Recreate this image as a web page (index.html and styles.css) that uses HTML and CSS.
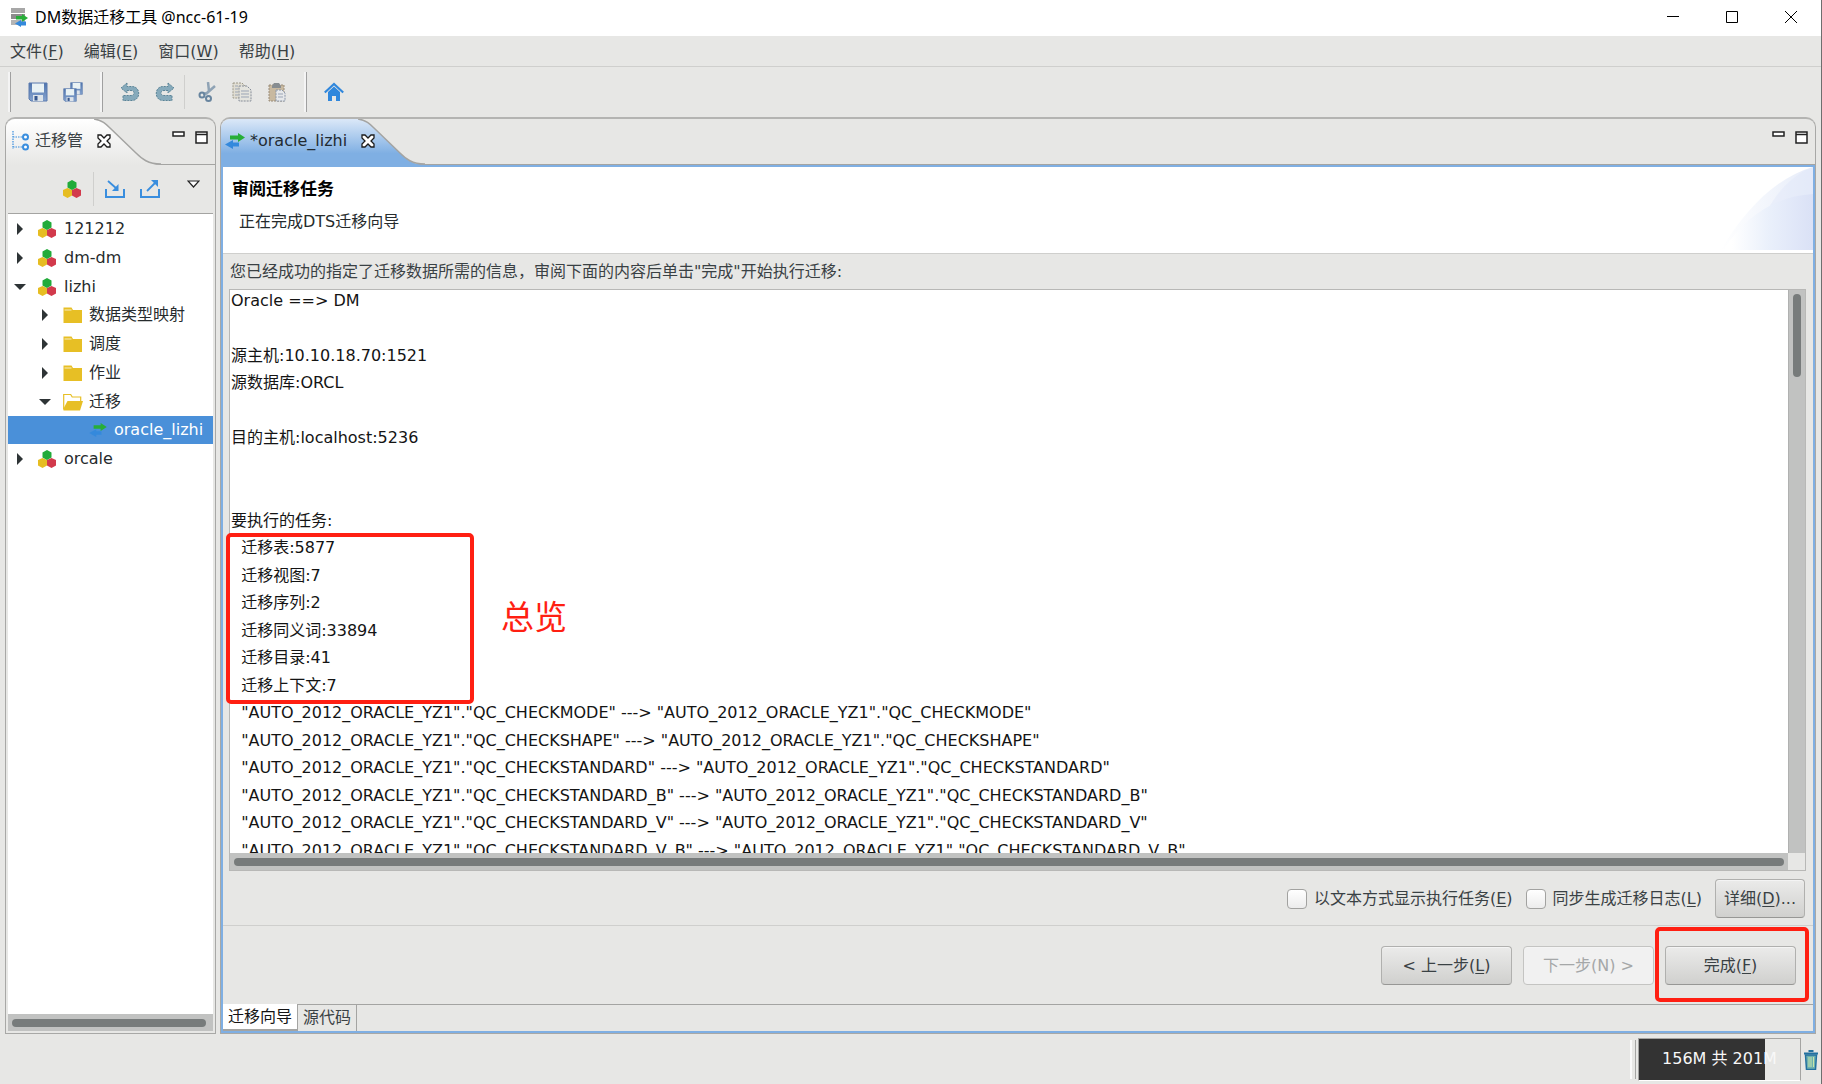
FILE: index.html
```html
<!DOCTYPE html>
<html lang="zh-CN">
<head>
<meta charset="utf-8">
<title>DM数据迁移工具 @ncc-61-19</title>
<link rel="stylesheet" href="styles.css">
</head>
<body>
<svg class="defs" aria-hidden="true">
  <defs>
    <linearGradient id="tab-plain" x1="0" y1="0" x2="0" y2="1"><stop offset="0" stop-color="#ffffff"/><stop offset="1" stop-color="#e7e7e5"/></linearGradient>
    <linearGradient id="tab-blue" x1="0" y1="0" x2="0" y2="1"><stop offset="0" stop-color="#dbe8f8"/><stop offset="0.75" stop-color="#7fafe3"/><stop offset="1" stop-color="#7fafe3"/></linearGradient>
    <linearGradient id="swoosh-a" x1="0" x2="1" y1="0" y2="0"><stop offset="0" stop-color="#ffffff"/><stop offset="1" stop-color="#e6ecf9"/></linearGradient>
    <linearGradient id="swoosh-b" x1="0" x2="1" y1="0" y2="0"><stop offset="0.1" stop-color="#ffffff"/><stop offset="0.5" stop-color="#eaf0fb"/><stop offset="1" stop-color="#dae1f6"/></linearGradient>
    <linearGradient id="floppy" x1="0" x2="0" y1="0" y2="1"><stop offset="0" stop-color="#4f74ad"/><stop offset="1" stop-color="#86a4cf"/></linearGradient>
    <symbol id="i-arrows" viewBox="0 0 20 16"><path d="M5 2.500h8V0l7 4.500-7 4.500V6.500H5z" fill="#27ae38"/><path d="M14 9.500H8V7l-8 4.500L8 16v-2.500h6z" fill="#3489dc"/></symbol>
    <symbol id="i-dm" viewBox="0 0 18 18"><path d="M4.500 8L9 10v5.500L4.500 18 0 15.500V10z" fill="#e6bd22"/><path d="M13.500 8L18 10v5.500L13.500 18 9 15.500V10z" fill="#d23a4c"/><path d="M9 0l4.500 2.500v5L9 10 4.500 7.500v-5z" fill="#22ab3a"/></symbol>
    <symbol id="i-close" viewBox="0 0 14 14"><path d="M1 1h3l3 3 3-3h3v3l-3 3 3 3v3h-3l-3-3-3 3H1v-3l3-3-3-3z" fill="#fff" stroke="#1c1c1c" stroke-width="1.300"/></symbol>
    <symbol id="i-min" viewBox="0 0 13 13"><rect x="1" y="1" width="11" height="4" fill="#fff" stroke="#222" stroke-width="1.500"/></symbol>
    <symbol id="i-max" viewBox="0 0 13 13"><rect x="1" y="1" width="11" height="11" fill="#fff" stroke="#222" stroke-width="1.500"/><path d="M1 3.500h11" stroke="#222" stroke-width="1.500"/></symbol>
    <symbol id="i-folder" viewBox="0 0 20 17"><path d="M.5 1h8l1.500 2.500h9V16.500H.5z" fill="#e7bf25"/><path d="M1.500 3.500h7" stroke="#f8ecc0"/></symbol>
    <symbol id="i-folder-open" viewBox="0 0 20 17"><path d="M.7 16V1h7l1.500 2.500h8.500v4" fill="#fff" stroke="#e7bf25" stroke-width="1.200"/><path d="M4.500 7.500H20L17 17H.5V15z" fill="#e7bf25"/></symbol>
    <symbol id="i-right" viewBox="0 0 12 12"><path d="M3 0l6 6-6 6z" fill="#2e3436"/></symbol>
    <symbol id="i-down" viewBox="0 0 12 12"><path d="M0 3h12L6 9z" fill="#2e3436"/></symbol>
    <symbol id="i-floppy" viewBox="0 0 20 20"><path d="M1 1h18v18H3l-2-2z" fill="url(#floppy)" stroke="#5a7bae"/><rect x="4" y="1.500" width="12" height="9" fill="#e9f2f4"/><rect x="5" y="13" width="10" height="6" fill="#dde4ea"/><rect x="6.500" y="14" width="3" height="4.500" fill="#37588f"/></symbol>
    <symbol id="i-undo" viewBox="0 0 20 20"><path d="M7 1L1 6l6 5V8.500h4c4 0 4 5 0 5H3v5h9c9 0 9-14 0-14H7z" fill="#86aabb" stroke="#5b8497" stroke-dasharray="2 1"/></symbol>
  </defs>
</svg>

<header class="titlebar">
  <svg class="app-icon" viewBox="0 0 18 20"><path d="M1 1h14v5H1z" fill="#a7a7a7"/><path d="M1 7h14v5H1z" fill="#8c8c8c"/><path d="M1 13h14v5H1z" fill="#b5b5b5"/><path d="M6 9h6V7l6 4-6 4v-2.500H6z" fill="#27ae38"/><path d="M16 14.500h-5V13l-6 3.500 6 3.500v-1.500h5z" fill="#3489dc"/></svg>
  <span class="app-title">DM数据迁移工具 @ncc-61-19</span>
  <div class="window-controls">
    <button aria-label="最小化"><svg viewBox="0 0 12 12"><path d="M0 5.500h12"/></svg></button>
    <button aria-label="最大化"><svg viewBox="0 0 12 12"><path d="M.5.5h11v11H.5z"/></svg></button>
    <button aria-label="关闭"><svg viewBox="0 0 12 12"><path d="M0 0l12 12M12 0L0 12"/></svg></button>
  </div>
</header>

<div class="window">
  <nav class="menubar">
    <button>文件(<u>F</u>)</button>
    <button>编辑(<u>E</u>)</button>
    <button>窗口(<u>W</u>)</button>
    <button>帮助(<u>H</u>)</button>
  </nav>

  <div class="toolbar">
    <div class="group">
      <button aria-label="保存"><svg viewBox="0 0 20 20"><use href="#i-floppy"/></svg></button>
      <button aria-label="全部保存"><svg viewBox="0 0 20 20"><use href="#i-floppy" x="7" y="0" width="13" height="13"/><use href="#i-floppy" x="0" y="6" width="14" height="14"/></svg></button>
    </div>
    <div class="group">
      <button aria-label="撤销"><svg viewBox="0 0 20 20"><use href="#i-undo"/></svg></button>
      <button aria-label="重做"><svg viewBox="0 0 20 20"><use href="#i-undo" transform="matrix(-1 0 0 1 20 0)"/></svg></button>
      <span class="divider"></span>
      <button aria-label="剪切"><svg viewBox="0 0 20 20"><path d="M11 0l1 9-3 3M18 4l-8 7-4 1" fill="none" stroke="#8fa3b5" stroke-width="2.500"/><circle cx="5" cy="13" r="2.500" fill="none" stroke="#68859f" stroke-width="2"/><circle cx="11.500" cy="16.500" r="2.500" fill="none" stroke="#68859f" stroke-width="2"/></svg></button>
      <button aria-label="复制"><svg viewBox="0 0 20 20"><path d="M1 1h9l3 3v12H1z" fill="#e0ddd2" stroke="#9c9888" stroke-dasharray="2 1"/><path d="M7 4h8l4 4v11H7z" fill="#e4e4de" stroke="#858c98" stroke-dasharray="2 1"/><path d="M3 4h3M3 7h3M3 10h3M3 13h3M9 9h8M9 12h8M9 15h8" stroke="#9ba5b5"/></svg></button>
      <button aria-label="粘贴"><svg viewBox="0 0 20 20"><path d="M2 3h15v16H2z" fill="#c8b9a0" stroke="#9a8c78" stroke-dasharray="2 1"/><path d="M5 4l2-3h5l2 3v2H5z" fill="#878d91"/><path d="M9 8h6l3 3v8H9z" fill="#e6e8ea" stroke="#8995a8" stroke-dasharray="2 1"/><path d="M11 12h5M11 15h5" stroke="#9ba5b5"/></svg></button>
    </div>
    <div class="group">
      <button aria-label="主页"><svg viewBox="0 0 20 20"><path d="M.8 10.500L10 2l9.200 8.500" fill="none" stroke="#3087dc" stroke-width="2.200"/><path d="M4 10l6-5.500 6 5.500v9h-4v-5H8v5H4z" fill="#3087dc"/></svg></button>
    </div>
  </div>

  <main class="workbench">
    <aside class="panel navigator">
      <div class="tabbar">
        <div class="tab plain">
          <svg class="tab-tail" viewBox="0 0 67 46"><path d="M0 0C8 1 12 5 16 9L42 34C48 40 54 45.500 67 46H0z" fill="url(#tab-plain)"/><path d="M0 0C8 1 12 5 16 9L42 34C48 40 54 45 67 45" fill="none" stroke="#a4a4a2" stroke-width="1.500"/></svg>
          <svg class="tab-icon" viewBox="0 0 18 20"><path d="M1 0v18M1 6h10M1 16h10" fill="none" stroke="#3a8ede" stroke-width="1.200" stroke-dasharray="1.500 1"/><circle cx="13.500" cy="6" r="2.500" fill="#fff" stroke="#3a8ede" stroke-width="2"/><circle cx="13.500" cy="16" r="2.500" fill="#fff" stroke="#3a8ede" stroke-width="2"/></svg>
          <span>迁移管</span>
          <button class="close" aria-label="关闭"><svg viewBox="0 0 14 14"><use href="#i-close"/></svg></button>
        </div>
        <div class="panel-controls">
          <button aria-label="最小化"><svg viewBox="0 0 13 13"><use href="#i-min"/></svg></button>
          <button aria-label="最大化"><svg viewBox="0 0 13 13"><use href="#i-max"/></svg></button>
        </div>
      </div>
      <div class="view-toolbar">
        <button aria-label="新建工程"><svg viewBox="0 0 18 18"><use href="#i-dm"/></svg></button>
        <span class="divider"></span>
        <button aria-label="导入"><svg viewBox="0 0 20 18"><path d="M1 9v8h18V9" fill="none" stroke="#3a8ede" stroke-width="2"/><path d="M3 1l9 8" stroke="#3a8ede" stroke-width="1.800"/><path d="M13.500 4v7H7z" fill="#3a8ede"/></svg></button>
        <button aria-label="导出"><svg viewBox="0 0 20 18"><path d="M1 9v8h18V9" fill="none" stroke="#3a8ede" stroke-width="2"/><path d="M7 11l9-9" stroke="#3a8ede" stroke-width="1.800"/><path d="M11 0h7v7z" fill="#3a8ede"/></svg></button>
        <button class="view-menu" aria-label="视图菜单"><svg viewBox="0 0 13 8"><path d="M1 1h11L6.500 7z" fill="#fff" stroke="#222" stroke-width="1.200"/></svg></button>
      </div>
      <ul class="tree">
        <li><svg class="twist"><use href="#i-right"/></svg><svg class="node"><use href="#i-dm"/></svg>121212</li>
        <li><svg class="twist"><use href="#i-right"/></svg><svg class="node"><use href="#i-dm"/></svg>dm-dm</li>
        <li><svg class="twist"><use href="#i-down"/></svg><svg class="node"><use href="#i-dm"/></svg>lizhi</li>
        <li class="level2"><svg class="twist"><use href="#i-right"/></svg><svg class="node"><use href="#i-folder"/></svg>数据类型映射</li>
        <li class="level2"><svg class="twist"><use href="#i-right"/></svg><svg class="node"><use href="#i-folder"/></svg>调度</li>
        <li class="level2"><svg class="twist"><use href="#i-right"/></svg><svg class="node"><use href="#i-folder"/></svg>作业</li>
        <li class="level2"><svg class="twist"><use href="#i-down"/></svg><svg class="node"><use href="#i-folder-open"/></svg>迁移</li>
        <li class="level3 selected"><svg class="node"><use href="#i-arrows"/></svg>oracle_lizhi</li>
        <li><svg class="twist"><use href="#i-right"/></svg><svg class="node"><use href="#i-dm"/></svg>orcale</li>
      </ul>
      <div class="scroll-h"><div class="thumb"></div></div>
    </aside>

    <section class="panel editor">
      <div class="tabbar">
        <div class="tab blue">
          <svg class="tab-tail" viewBox="0 0 67 46"><path d="M0 0C8 1 12 5 16 9L42 34C48 40 54 45.500 67 46H0z" fill="url(#tab-blue)"/><path d="M0 0C8 1 12 5 16 9L42 34C48 40 54 45 67 45" fill="none" stroke="#a4a4a2" stroke-width="1.500"/></svg>
          <svg class="tab-icon" viewBox="0 0 20 16"><use href="#i-arrows"/></svg>
          <span>*oracle_lizhi</span>
          <button class="close" aria-label="关闭"><svg viewBox="0 0 14 14"><use href="#i-close"/></svg></button>
        </div>
        <div class="panel-controls">
          <button aria-label="最小化"><svg viewBox="0 0 13 13"><use href="#i-min"/></svg></button>
          <button aria-label="最大化"><svg viewBox="0 0 13 13"><use href="#i-max"/></svg></button>
        </div>
      </div>
      <div class="editor-body">
        <div class="wizard-header">
          <div>
            <h1>审阅迁移任务</h1>
            <p>正在完成DTS迁移向导</p>
          </div>
          <svg class="swoosh" viewBox="0 0 92 83"><path d="M0 83C24 42 56 10 92 0V83z" fill="url(#swoosh-a)"/><path d="M46 44C58 22 72 8 92 0V83H46z" fill="#dfe7f8" opacity=".45"/><path d="M2 83C24 50 54 29 92 27V83z" fill="url(#swoosh-b)"/></svg>
        </div>
        <p class="prompt" id="prompt">您已经成功的指定了迁移数据所需的信息，审阅下面的内容后单击"完成"开始执行迁移:</p>
        <div class="review">
          <div class="review-text" role="document" aria-labelledby="prompt">
            <p>Oracle ==&gt; DM</p>
            <p></p>
            <p>源主机:10.10.18.70:1521</p>
            <p>源数据库:ORCL</p>
            <p></p>
            <p>目的主机:localhost:5236</p>
            <p></p>
            <p></p>
            <p>要执行的任务:</p>
            <p>  迁移表:5877</p>
            <p>  迁移视图:7</p>
            <p>  迁移序列:2</p>
            <p>  迁移同义词:33894</p>
            <p>  迁移目录:41</p>
            <p>  迁移上下文:7</p>
            <p>  "AUTO_2012_ORACLE_YZ1"."QC_CHECKMODE" ---&gt; "AUTO_2012_ORACLE_YZ1"."QC_CHECKMODE"</p>
            <p>  "AUTO_2012_ORACLE_YZ1"."QC_CHECKSHAPE" ---&gt; "AUTO_2012_ORACLE_YZ1"."QC_CHECKSHAPE"</p>
            <p>  "AUTO_2012_ORACLE_YZ1"."QC_CHECKSTANDARD" ---&gt; "AUTO_2012_ORACLE_YZ1"."QC_CHECKSTANDARD"</p>
            <p>  "AUTO_2012_ORACLE_YZ1"."QC_CHECKSTANDARD_B" ---&gt; "AUTO_2012_ORACLE_YZ1"."QC_CHECKSTANDARD_B"</p>
            <p>  "AUTO_2012_ORACLE_YZ1"."QC_CHECKSTANDARD_V" ---&gt; "AUTO_2012_ORACLE_YZ1"."QC_CHECKSTANDARD_V"</p>
            <p>  "AUTO_2012_ORACLE_YZ1"."QC_CHECKSTANDARD_V_B" ---&gt; "AUTO_2012_ORACLE_YZ1"."QC_CHECKSTANDARD_V_B"</p>
          </div>
          <div class="scroll-v"><div class="thumb"></div></div>
          <div class="scroll-h"><div class="thumb"></div></div>
          <div class="corner"></div>
          <div class="mark mark-summary"></div>
          <div class="mark-label">总览</div>
        </div>
        <div class="options">
          <label><input type="checkbox"><span>以文本方式显示执行任务(<u>E</u>)</span></label>
          <label><input type="checkbox"><span>同步生成迁移日志(<u>L</u>)</span></label>
          <button class="btn btn-small">详细(<u>D</u>)...</button>
        </div>
        <div class="actions">
          <button class="btn">&lt; 上一步(<u>L</u>)</button>
          <button class="btn" disabled>下一步(N) &gt;</button>
          <div class="finish"><button class="btn">完成(<u>F</u>)</button><div class="mark mark-finish"></div></div>
        </div>
        <div class="page-tabs">
          <button class="current">迁移向导</button>
          <button>源代码</button>
        </div>
      </div>
    </section>
  </main>

  <footer class="statusbar">
    <div class="heap"><div class="heap-used" style="width:78%"></div><span>156M 共 201M</span></div>
    <button class="trash" aria-label="运行垃圾回收"><svg viewBox="0 0 14 20"><path d="M1.500 5h11l-1 14.500h-9z" fill="#6fb0b0" stroke="#22709f" stroke-width="1.500"/><path d="M0 3.500h14M4.500 1h5" stroke="#22709f" stroke-width="2"/><path d="M5 7v10M7 7v10M9.500 7v10" stroke="#c8e6a8" stroke-width="1"/></svg></button>
  </footer>
</div>
</body>
</html>
```

FILE: styles.css
```css
* { box-sizing: border-box; }
body {
  margin: 0;
  height: 100vh;
  min-height: 640px;
  display: flex;
  flex-direction: column;
  border-right: 1px solid #6e6e6e;
  background: #e7e7e5;
  color: #3a4144;
  font: 16px/20px "DejaVu Sans", "Noto Sans CJK SC", sans-serif;
}
h1, p, ul { margin: 0; padding: 0; }
button { padding: 0; border: 0; background: none; color: inherit; font: inherit; }
svg { display: block; flex: none; }
u { text-underline-offset: 2px; }
.defs { position: absolute; width: 0; height: 0; }

/* window title */
.titlebar { display: flex; align-items: center; height: 36px; padding: 0 24px 2px 10px; gap: 7px; background: #fff; color: #000; font-family: "Noto Sans", "Noto Sans CJK SC", sans-serif; }
.app-icon { width: 18px; height: 20px; }
.app-title { flex: 1; }
.window-controls { display: flex; gap: 47px; }
.window-controls svg { width: 12px; height: 12px; fill: none; stroke: #000; }

.window { flex: 1; min-height: 0; display: flex; flex-direction: column; }
.menubar { display: flex; gap: 20px; height: 31px; padding: 2px 10px 0; border-bottom: 1px solid #cfcfcd; }

/* main toolbar */
.toolbar { display: flex; align-items: center; height: 50px; padding-left: 8px; }
.group { display: flex; align-items: center; height: 40px; padding: 0 10px 0 9px; border-left: 3px ridge #f4f4f4; }
.toolbar button { width: 35px; }
.toolbar svg { width: 20px; height: 20px; margin: 0 auto; }
.divider { width: 1px; height: 34px; background: #cfcfcd; }
.group .divider { margin: 0 4px 0 2px; }

/* panels */
.workbench { flex: 1; min-height: 0; display: flex; gap: 4px; padding: 0 5px; }
.panel { display: flex; flex-direction: column; border: 1px solid #a8a8a6; border-top: 2px solid #b4b4b2; border-radius: 10px 10px 0 0; }
.tabbar { flex: none; display: flex; justify-content: space-between; height: 46px; border-bottom: 1px solid #a4a4a2; }
.tab { position: relative; display: flex; align-items: center; height: 46px; padding: 0 50px 2px 0; border-radius: 9px 0 0 0; isolation: isolate; }
.tab::before { content: ""; position: absolute; z-index: -1; left: 0; right: 67px; top: 0; bottom: 0; border-radius: 9px 0 0 0; }
.tab-tail { position: absolute; z-index: -1; right: 0; top: 0; width: 67px; height: 46px; }
.plain { padding-left: 6px; gap: 5px; }
.plain::before { background: linear-gradient(#fff, #e7e7e5); }
.blue { padding-left: 4px; gap: 5px; color: #222b33; }
.blue::before { background: linear-gradient(#dbe8f8, #7fafe3 75%); }
.plain .tab-icon { width: 18px; height: 20px; }
.blue .tab-icon { width: 20px; height: 16px; }
.close { margin-left: 9px; }
.close svg { width: 14px; height: 14px; }
.panel-controls { display: flex; align-items: flex-start; gap: 10px; padding: 12px 7px 0 0; }
.panel-controls svg { width: 13px; height: 13px; }

/* navigator */
.navigator { flex: 0 0 211px; }
.view-toolbar { flex: none; display: flex; align-items: center; height: 48px; padding-left: 56px; }
.view-toolbar svg { width: 20px; height: 18px; }
.view-toolbar .divider { margin: 0 11px; }
.view-toolbar button + button { margin-left: 15px; }
.view-toolbar .view-menu { margin: 0 15px 10px auto; }
.view-toolbar .view-menu svg { width: 13px; height: 8px; }
.tree { flex: 1; margin: 0 2px; border-top: 1px solid #a4a4a2; background: #fff; color: #262b2d; list-style: none; }
.tree li { display: flex; align-items: center; height: 29px; padding-left: 6px; white-space: nowrap; }
.tree li:nth-child(4n) { height: 28px; }
.twist { width: 12px; height: 12px; margin-right: 12px; }
.node { width: 18px; height: 18px; margin-right: 8px; }
.tree .level2 { padding-left: 31px; }
.level2 .node { width: 20px; margin-right: 6px; }
.tree .level3 { padding-left: 80px; }
.level3 .node { width: 20px; height: 14px; margin-right: 6px; }
.tree .selected { background: #4a90d9; color: #fff; }
.navigator .scroll-h { flex: none; margin: 0 2px 2px; }
.navigator .thumb { margin: 0 7px 0 4px; }

.scroll-h, .scroll-v { display: flex; background: #c1c2c1; }
.scroll-h { height: 17px; align-items: center; }
.scroll-h .thumb { flex: 1; height: 8px; border-radius: 4px; background: #777b7b; }

/* editor */
.editor { flex: 1; min-width: 0; }
.editor-body { flex: 1; min-height: 0; display: flex; flex-direction: column; border: 2px solid #7fafe3; }
.wizard-header { flex: none; display: flex; justify-content: space-between; height: 87px; padding-left: 9px; border-bottom: 1px solid #cfcfcd; background: #fff; color: #262b2d; }
.wizard-header h1 { padding: 12px 0 13px; color: #000; font-size: 17px; font-weight: 700; line-height: 20px; }
.wizard-header p { padding-left: 7px; }
.swoosh { width: 92px; height: 83px; }
.prompt { flex: none; padding: 8px 7px; height: 35px; }
.review { position: relative; flex: 1; min-height: 0; display: grid; grid-template: minmax(0, 1fr) 17px / minmax(0, 1fr) 17px; margin: 0 7px 0 6px; border: 1px solid #b8b8b6; }
.review-text { overflow: hidden; background: #fff; color: #141414; }
.review-text p { height: 22px; margin: 0 0 5px 1px; line-height: 22px; white-space: pre; }
.review-text p:nth-child(even) { margin-bottom: 6px; }
.scroll-v { justify-content: center; border-left: 1px solid #b0b1b0; }
.scroll-v .thumb { flex: none; width: 8px; height: 83px; margin-top: 4px; border-radius: 4px; background: #777b7b; }
.review .scroll-h .thumb { margin: 0 4px; }

.options { flex: none; display: flex; justify-content: flex-end; align-items: center; padding: 8px 8px 7px; border-bottom: 1px solid #cfcfcd; }
.options label { display: flex; align-items: center; gap: 7px; margin-right: 13px; }
.options input { appearance: none; width: 20px; height: 20px; margin: 0; border: 1px solid #a2a2a0; border-radius: 4px; background: linear-gradient(#fff, #ececec); }
.btn { width: 131px; height: 39px; border: 1px solid #b0b0ae; border-bottom-color: #979795; border-radius: 4px; background: linear-gradient(#ebebea, #d0d0ce); box-shadow: inset 0 1px #f4f4f4; }
.btn:disabled { border-color: #c4c4c2; background: #f1f1f1; color: #a5a7a8; }
.btn-small { width: 90px; }
.actions { flex: none; display: flex; justify-content: flex-end; gap: 11px; padding: 20px 17px 19px; border-bottom: 1px solid #a4a4a2; }
.finish { position: relative; }
.page-tabs { flex: none; display: flex; height: 26px; }
.page-tabs button { padding: 0 5px; border-right: 1px solid #a4a4a2; }
.page-tabs .current { margin-top: -1px; border-bottom: 2px solid #a4a4a2; background: #fff; color: #141414; }

/* red annotations */
.mark { position: absolute; border: 4px solid #ff1f12; border-radius: 5px; pointer-events: none; }
.mark-summary { left: -4px; top: 243px; width: 248px; height: 171px; }
.mark-label { position: absolute; left: 271px; top: 305px; color: #ff1f12; font: 33px/40px "Noto Sans CJK SC", sans-serif; }
.mark-finish { inset: -19px -13px -17px -10px; }

/* status bar */
.statusbar { flex: none; display: flex; justify-content: flex-end; gap: 3px; height: 50px; padding: 4px 3px 3px; }
.heap { position: relative; width: 163px; border: 1px solid #a4a4a2; border-bottom-color: #fff; text-align: center; line-height: 40px; color: #f8f8f8; isolation: isolate; }
.heap::before { content: ""; position: absolute; left: -9px; top: 1px; bottom: 1px; width: 3px; border-left: 2px solid #fafafa; border-right: 1px solid #a4a4a2; }
.heap-used { position: absolute; z-index: -1; inset: 0 auto 0 0; background: #333; }
.trash svg { width: 14px; height: 20px; }
```
